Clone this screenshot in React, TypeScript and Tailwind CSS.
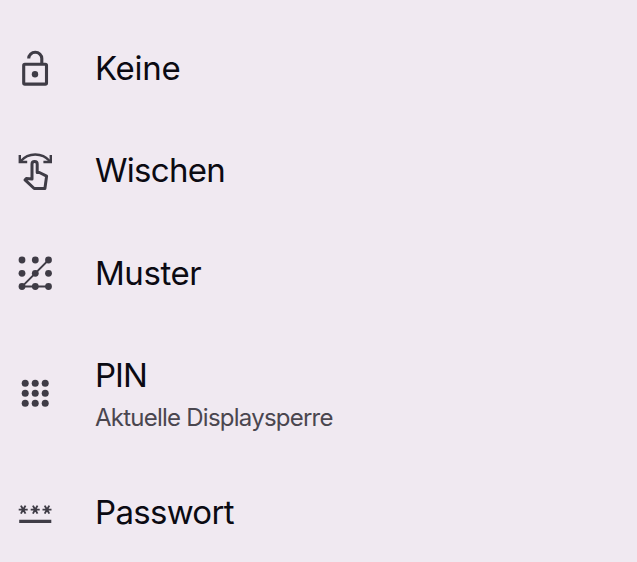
import type { ReactNode } from 'react';

type LockOption = {
  title: string;
  titleClass: string;
  summary?: string;
  icon: ReactNode;
};

const grid = (positions: number[], radius: number) =>
  positions.flatMap((y) =>
    positions.map((x) => <circle key={`${x}-${y}`} cx={x} cy={y} r={radius} />),
  );

const LockOpenIcon = () => (
  <svg viewBox="0 0 50 50" className="size-[50px]" fill="none" stroke="currentColor" strokeWidth="3.1">
    <rect x="13.7" y="20.3" width="22.8" height="19.8" rx="1.2" />
    <path d="M18.7 14.6a6.55 6.4 0 0 1 13.1 0V20" />
    <circle cx="25" cy="30.2" r="3.2" fill="currentColor" stroke="none" />
  </svg>
);

const SwipeIcon = () => (
  <svg viewBox="0 0 50 50" className="size-[50px]" fill="none" stroke="currentColor">
    <path d="M10.5 15.3C18.5 6.2 32 6.2 40 15.3" strokeWidth="2.3" />
    <path d="M9.8 8.9V16H17.2M40.8 8.9V16H33.4" strokeWidth="2.4" />
    <path
      d="M22 33V18a2.6 2.6 0 0 1 5.2 0v8.5h2.2l7.2 3.6-1.7 12.4H24.2l-9.2-8.6 1.3-1.4z"
      strokeWidth="3"
      strokeLinejoin="round"
    />
  </svg>
);

const PatternIcon = () => (
  <svg viewBox="0 0 50 50" className="size-[50px]" fill="currentColor">
    {grid([12, 25.3, 38.5], 3.4)}
    <path d="M38.5 12L12 38.5H38.5" fill="none" stroke="currentColor" strokeWidth="1.8" />
  </svg>
);

const PinIcon = () => (
  <svg viewBox="0 0 50 50" className="size-[50px]" fill="currentColor">
    {grid([15.2, 25.2, 35.2], 3.5)}
  </svg>
);

const PasswordIcon = () => (
  <svg viewBox="0 0 50 50" className="size-[50px]" fill="none" stroke="currentColor">
    {[13.2, 25.2, 37].map((x) => (
      <path
        key={x}
        d={`M${x - 4.5} 21.6h9M${x - 2.3} 17.6l4.6 8M${x + 2.3} 17.6l-4.6 8`}
        strokeWidth="1.9"
      />
    ))}
    <path d="M9.2 33.4H41.3" strokeWidth="3.2" />
  </svg>
);

const options: LockOption[] = [
  { title: 'Keine', titleClass: 'tracking-[-0.3px]', icon: <LockOpenIcon /> },
  { title: 'Wischen', titleClass: 'tracking-[-0.7px]', icon: <SwipeIcon /> },
  { title: 'Muster', titleClass: 'tracking-[-0.45px]', icon: <PatternIcon /> },
  {
    title: 'PIN',
    titleClass: 'tracking-[-1px]',
    summary: 'Aktuelle Displaysperre',
    icon: <PinIcon />,
  },
  { title: 'Passwort', titleClass: 'tracking-[-0.7px]', icon: <PasswordIcon /> },
];

export default function App() {
  return (
    <main className="h-[562px] w-full overflow-hidden bg-[#f0e9f1] pt-[17.5px] font-['Inter',sans-serif]">
      <ul>
        {options.map(({ title, titleClass, summary, icon }) => (
          <li
            key={title}
            className={`flex items-center pl-2.5 ${summary ? 'h-[137px]' : 'h-[102.3px]'}`}
          >
            <span className="shrink-0 text-[#3f3c46]">{icon}</span>
            <div className={summary ? 'pt-[3px] pl-[35px]' : 'pb-px pl-[35px]'}>
              <p className={`text-[33px] leading-[42px] text-[#0b0a12] ${titleClass}`}>{title}</p>
              {summary ? (
                <p className="pt-[5px] text-[24px] leading-[34px] tracking-[-0.76px] text-[#4a464f]">
                  {summary}
                </p>
              ) : null}
            </div>
          </li>
        ))}
      </ul>
    </main>
  );
}
